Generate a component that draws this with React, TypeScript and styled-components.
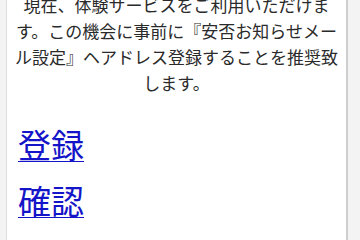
import styled, { createGlobalStyle } from 'styled-components';

const GlobalStyle = createGlobalStyle`
  html, body {
    margin: 0;
    padding: 0;
    background-color: #f3f3f3;
    overflow: hidden;
  }
`;

export default function App() {
  return (
    <>
      <GlobalStyle />
      <Page>
        <Panel>
          <Notice>
            現在、体験サービスをご利用いただけま
            <br />
            す。この機会に事前に『安否お知らせメー
            <br />
            ル設定』ヘアドレス登録することを推奨致
            <br />
            します。
          </Notice>
          <LinkList>
            <LinkItem href="#">登録</LinkItem>
            <LinkItem href="#">確認</LinkItem>
          </LinkList>
        </Panel>
      </Page>
    </>
  );
}

const Page = styled.div`
  width: 360px;
  height: 240px;
  display: flex;
  background-color: #f3f3f3;
`;

const Panel = styled.div`
  margin-left: 6px;
  width: 342px;
  box-sizing: border-box;
  height: 240px;
  padding: 0 7px;
  background-color: #ffffff;
  border-left: 1px solid #dedede;
  border-right: 2px solid #cfcfcf;
  display: flex;
  flex-direction: column;
  font-family: 'Noto Sans CJK JP', 'Noto Sans', sans-serif;
`;

const Notice = styled.p`
  margin: -8px 0 0;
  font-size: 17px;
  line-height: 26px;
  text-align: center;
  color: #2a2a2a;
  white-space: nowrap;
`;

const LinkList = styled.div`
  margin-top: 20px;
  display: flex;
  flex-direction: column;
  align-items: flex-start;
  padding-left: 4px;
`;

const LinkItem = styled.a`
  font-size: 33px;
  line-height: 56px;
  color: #1414c8;
  text-decoration: underline;
  text-decoration-thickness: 1px;
  text-underline-offset: 3px;
`;
